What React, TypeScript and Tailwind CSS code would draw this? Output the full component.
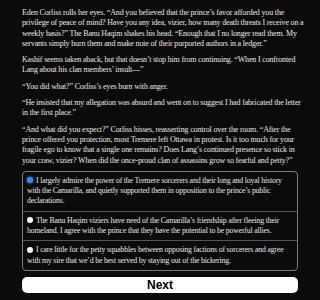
import React from "react";

const serif = { fontFamily: '"Liberation Serif", "DejaVu Serif", serif' };

// lines broken where the reference breaks them
const paragraphs: string[][] = [
  [
    "Eden Corliss rolls her eyes. \u201cAnd you believed that the prince\u2019s favor afforded you the",
    "privilege of peace of mind? Have you any idea, vizier, how many death threats I receive on a",
    "weekly basis?\u201d The Banu Haqim shakes his head. \u201cEnough that I no longer read them. My",
    "servants simply burn them and make note of their purported authors in a ledger.\u201d",
  ],
  [
    "Kashif seems taken aback, but that doesn\u2019t stop him from continuing. \u201cWhen I confronted",
    "Lang about his clan members\u2019 insult\u2014\u201d",
  ],
  ["\u201cYou did what?\u201d Corliss\u2019s eyes burn with anger."],
  [
    "\u201cHe insisted that my allegation was absurd and went on to suggest I had fabricated the letter",
    "in the first place.\u201d",
  ],
  [
    "\u201cAnd what did you expect?\u201d Corliss hisses, reasserting control over the room. \u201cAfter the",
    "prince offered you protection, most Tremere left Ottawa in protest. Is it too much for your",
    "fragile ego to know that a single one remains? Does Lang\u2019s continued presence so stick in",
    "your craw, vizier? When did the once-proud clan of assassins grow so fearful and petty?\u201d",
  ],
];

const options: string[][] = [
  [
    "I largely admire the power of the Tremere sorcerers and their long and loyal history",
    "with the Camarilla, and quietly supported them in opposition to the prince\u2019s public",
    "declarations.",
  ],
  [
    "The Banu Haqim viziers have need of the Camarilla\u2019s friendship after fleeing their",
    "homeland. I agree with the prince that they have the potential to be powerful allies.",
  ],
  [
    "I care little for the petty squabbles between opposing factions of sorcerers and agree",
    "with my sire that we\u2019d be best served by staying out of the bickering.",
  ],
];

export default function App() {
  return (
    <div className="w-[320px] h-[300px] overflow-hidden bg-[#0b0b0b] text-[#e6e6e6]">
      <div className="px-[22px] pt-[8px]" style={serif}>
        <div className="flex flex-col gap-[6px] text-[8px] leading-[10.3px] tracking-[-0.17px]">
          {paragraphs.map((p, i) => (
            <p key={i}>
              {p.map((l, j) => (
                <span key={j} className="block whitespace-nowrap">
                  {l}
                </span>
              ))}
            </p>
          ))}
        </div>
        <div className="mt-[5px] border border-[#7a7a7a] rounded-[4px] text-[7.8px] leading-[10.3px] tracking-[-0.17px]">
          {options.map((o, i) => (
            <div
              key={i}
              className={
                "pl-[4px] pr-[3px] py-[4px] " +
                (i > 0 ? "border-t border-[#555]" : "")
              }
            >
              {o.map((l, j) => (
                <span key={j} className="block whitespace-nowrap">
                  {j === 0 && (
                    <span
                      className={
                        "inline-block w-[6px] h-[6px] rounded-full mr-[3px] align-[-0.5px] " +
                        (i === 0
                          ? "bg-[#3b82f6] shadow-[0_0_3px_#60a5fa]"
                          : "bg-white")
                      }
                    />
                  )}
                  {l}
                </span>
              ))}
            </div>
          ))}
        </div>
        <button
          className="mt-[6px] w-full h-[16px] rounded-[5px] bg-white text-black font-bold text-[12px] leading-[16px]"
          style={{ fontFamily: '"Liberation Sans", Arial, sans-serif' }}
        >
          Next
        </button>
      </div>
    </div>
  );
}
